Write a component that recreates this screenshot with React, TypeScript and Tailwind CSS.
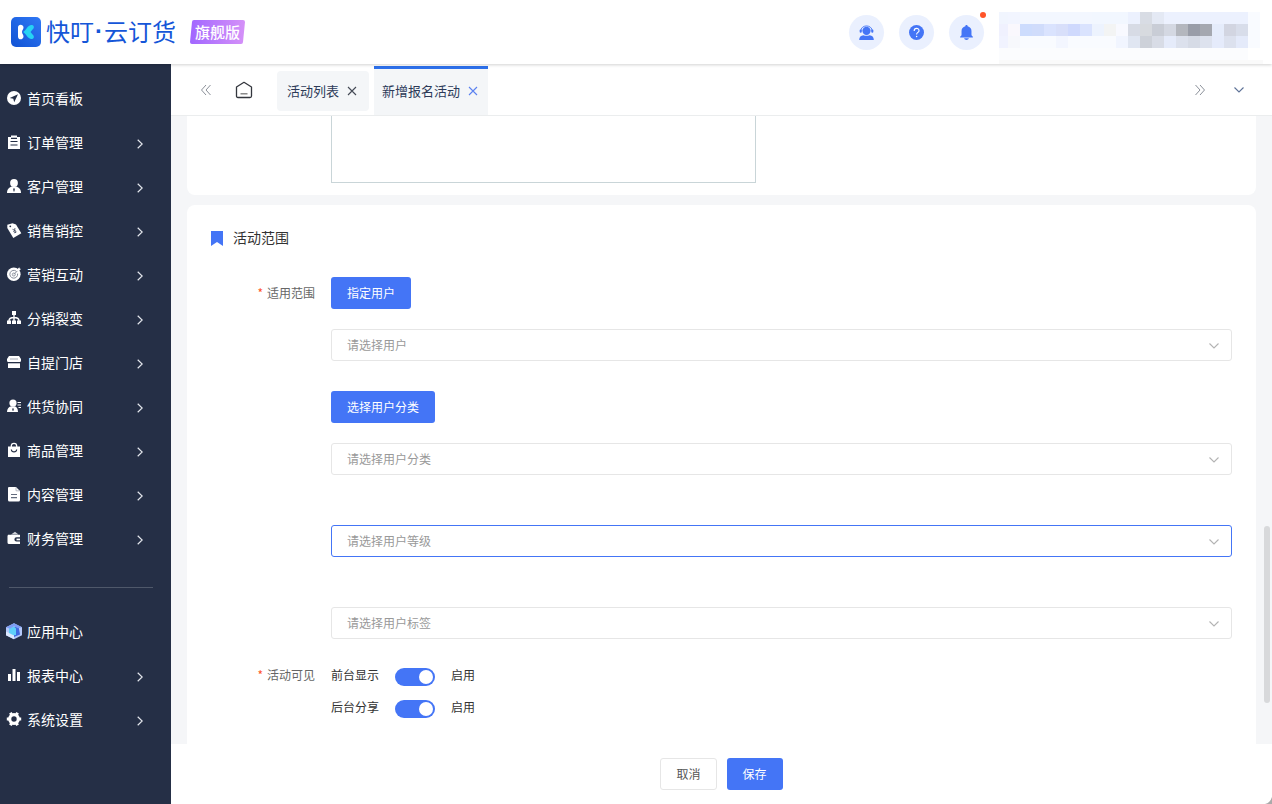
import { useId, useState } from "react";
import type { ReactNode } from "react";

const INK = "#252f46";

const icons: Record<string, ReactNode> = {
  home: (
    <>
      <circle cx="7" cy="7" r="7" fill="#fff" />
      <path d="M11 3.2 2.8 6.9l3.5.9.9 3.4z" fill={INK} />
    </>
  ),
  order: (
    <>
      <path d="M1 2h3V.5h6V2h3v12H1z" fill="#fff" />
      <path d="M4 3.4h6M3.5 6.5h7M3.5 10h7" stroke={INK} strokeWidth="1.1" />
    </>
  ),
  customer: (
    <>
      <circle cx="7" cy="4" r="3.9" fill="#fff" />
      <path d="M0 14c0-4 2.500-6 5-6.500h4c2.500.5 5 2.500 5 6.500z" fill="#fff" />
      <path d="m7 9 .8 1-.4 2.500h-.8L6.200 10z" fill={INK} />
    </>
  ),
  sale: (
    <>
      <path d="M.3 1.800 5.500.2 9 1.500l5.300 8.700-8 4.800L.3 5z" fill="#fff" />
      <circle cx="3.300" cy="3.300" r=".9" fill={INK} />
      <path d="m5.500 6.300 2 .9.500-2.200M7.500 7.200l1.400 2.800M6.200 8.600l2.500-1.300M6.900 10l2.500-1.300" fill="none" stroke={INK} strokeWidth=".7" />
    </>
  ),
  target: (
    <>
      <circle cx="6.800" cy="7.300" r="6.800" fill="#fff" />
      <path d="M9.300 4.300A3.900 3.900 0 1 0 10.600 6.600" fill="none" stroke="#868c99" strokeWidth="1" />
      <circle cx="6.800" cy="7.500" r="1.500" fill="none" stroke="#868c99" strokeWidth=".9" />
      <path d="m7 7.300 4.200-4.200" stroke="#868c99" strokeWidth="1" />
      <path d="m10 2.500 2.300-2.300.4 1.400 1.300.4-2.300 2.200-1.500-.2z" fill="#fff" />
    </>
  ),
  fission: (
    <>
      <path d="M5 0h4v4H5zM0 9.500h4V13H0zM5 9.500h4V13H5zM10 9.500h4V13h-4z" fill="#fff" />
      <path d="M7 3v7M2 10c0-2.500 2-3.500 5-3.500s5 1 5 3.500" fill="none" stroke="#fff" strokeWidth="1.400" />
    </>
  ),
  store: (
    <>
      <path d="M2 1h10l2 3v1.500c0 1-.8 1.600-1.700 1.600H1.700C.8 7.100 0 6.500 0 5.500V4z" fill="#fff" />
      <path d="M3 4h8" stroke="#a5aab4" strokeWidth="1" />
      <path d="M1 8.300h12V13H1z" fill="#fff" />
    </>
  ),
  supply: (
    <>
      <circle cx="6" cy="4" r="3.600" fill="#fff" />
      <path d="M0 13c0-3.500 2-5.200 4.500-5.700h3c2 .4 3.500 2.200 3.500 5.700z" fill="#fff" />
      <path d="m6 9 .8 1-.5 2h-.6L5.200 10z" fill={INK} />
      <path d="M10.500 3.500H14M10.500 6H14M11.500 8.500H14" stroke="#fff" strokeWidth="1.100" />
    </>
  ),
  goods: (
    <>
      <path d="M1 3.500h12V14H1z" fill="#fff" />
      <path d="M4.300 4V3a2.700 2.700 0 0 1 5.400 0v1" fill="none" stroke="#fff" strokeWidth="1.300" />
      <path d="M4.300 6.500c.4 3.200 5 3.200 5.400 0" fill="none" stroke={INK} strokeWidth="1.200" />
    </>
  ),
  content: (
    <>
      <path d="M2 0h7l4 4v9a1.500 1.500 0 0 1-1.500 1.500h-9A1.500 1.500 0 0 1 1 13V1a1 1 0 0 1 1-1z" fill="#fff" />
      <path d="M9 .3v3.500h3.800" fill="none" stroke="#a5aab4" strokeWidth=".8" />
      <path d="M4 7.500h6M4 10.700h6" stroke="#626b7d" strokeWidth="1.200" />
    </>
  ),
  finance: (
    <>
      <path d="m4 3.500 4-2.700 3.500 2.700z" fill="#cfd2d8" />
      <path d="M1 3.800h12v2.500H9.500a2 2 0 0 0 0 4.200H13V13H2a1.500 1.500 0 0 1-1.500-1.500V5z" fill="#fff" />
      <path d="M9.500 7.600H13v1.700H9.500z" fill="#fff" />
    </>
  ),
  apps: (
    <>
      <path d="m7-.8 8 4v8l-8 4-8-4v-8z" fill="#b4c9fa" />
      <path d="m7 3 4.500-1 1.500 8.500L7 13z" fill="#4169e1" />
      <path d="m2 4.500 5-2 2 2V11l-5 .5-2-2z" fill="#5fd0fa" />
      <path d="m-1 3.200 8-4 8 4-4 1-4-2-4 2.500z" fill="#7d9df5" />
      <path d="m-1 7.500 8 4v3.700l-8-4z" fill="#dce9ff" />
    </>
  ),
  report: <path d="M1 6h3v7H1zM5.500 1h3v12h-3zM10 4h3v9h-3z" fill="#fff" />,
  settings: (
    <>
      <circle cx="7" cy="7" r="4.300" fill="none" stroke="#fff" strokeWidth="3.200" />
      <path
        d="M3.400.8 4.900 3.300M10.600.8 9.100 3.300M3.400 13.200l1.500-2.500M10.600 13.200l-1.500-2.500M-.2 7h2.700M11.500 7h2.700"
        stroke="#fff"
        strokeWidth="3"
      />
    </>
  ),
};

type Item = { icon: string; label: string; leaf?: boolean };

const primary: Item[] = [
  { icon: "home", label: "首页看板", leaf: true },
  { icon: "order", label: "订单管理" },
  { icon: "customer", label: "客户管理" },
  { icon: "sale", label: "销售销控" },
  { icon: "target", label: "营销互动" },
  { icon: "fission", label: "分销裂变" },
  { icon: "store", label: "自提门店" },
  { icon: "supply", label: "供货协同" },
  { icon: "goods", label: "商品管理" },
  { icon: "content", label: "内容管理" },
  { icon: "finance", label: "财务管理" },
];

const secondary: Item[] = [
  { icon: "apps", label: "应用中心", leaf: true },
  { icon: "report", label: "报表中心" },
  { icon: "settings", label: "系统设置" },
];

function NavList({ items }: { items: Item[] }) {
  return (
    <ul>
      {items.map((item) => (
        <li key={item.label}>
          <a href="#" className="flex h-11 items-center pr-7 pl-[7px] text-sm text-white">
            <svg viewBox="0 0 14 15" className="mr-1.5 h-[15px] w-3.5 shrink-0 overflow-visible" aria-hidden="true">
              {icons[item.icon]}
            </svg>
            <span className="flex-1">{item.label}</span>
            {!item.leaf && (
              <svg viewBox="0 0 6 10" className="mt-1 h-2.5 w-1.5" fill="none" stroke="#e3e6ec" strokeWidth="1.200" aria-hidden="true">
                <path d="m.7.7 4.500 4.300L.7 9.300" />
              </svg>
            )}
          </a>
        </li>
      ))}
    </ul>
  );
}

function Chevron({ className, stroke }: { className: string; stroke: string }) {
  return (
    <svg viewBox="0 0 10 6" className={className} fill="none" stroke={stroke} strokeWidth="1.100" aria-hidden="true">
      <path d="m.5.5 4.500 4.500L9.500.5" />
    </svg>
  );
}

function DoubleArrow({ flip }: { flip?: boolean }) {
  return (
    <svg viewBox="0 0 10 12" className="h-3 w-2.5" fill="none" stroke="#8b9099" strokeWidth="1" aria-hidden="true">
      <path d={flip ? "m.5 1 4.500 5-4.500 5M5 1l4.500 5L5 11" : "M5 1 .5 6 5 11M9.500 1 5 6l4.500 5"} />
    </svg>
  );
}

function Cross({ stroke }: { stroke: string }) {
  return (
    <svg viewBox="0 0 10 10" className="size-2.5" fill="none" stroke={stroke} strokeWidth="1.100" aria-hidden="true">
      <path d="m1 1 8 8M9 1 1 9" />
    </svg>
  );
}

const mosaic: string[][] = [
  ["#f1f5fe", "#f2f5ff", "#f3f7ff", "#f3f7ff", "#f3f7ff", "#f3f7ff", "#f3f7ff", "#f3f7ff", "#f2f7ff", "#f2f7ff", "#f2f7ff", "#ecf1fe", "#d8dce4", "#e4e9f4", "#ecf1fe", "#ecf1fe", "#ecf1fe", "#ecf1fe", "#ecf1fe", "#ecf1fe", "#ecf1fe", "#f9fbff"],
  ["#f0f1fe", "#faf8fd", "#cddcfd", "#d0dcfb", "#dae3fe", "#d8dffa", "#cfd9fd", "#dae3fe", "#edf3fe", "#f3f4f4", "#f8f9ff", "#d7dbe5", "#d7dadf", "#c9cdd6", "#d4d8e2", "#b4b7be", "#999da8", "#a5a8b0", "#e5ecfb", "#d2d5e1", "#d8ddea", "#f9fbff"],
  ["#f1f3ff", "#f7f8fc", "#f9fbff", "#f9fbff", "#f9fbff", "#f3f6ff", "#f9fbff", "#f9fbff", "#f9fbff", "#f9fbff", "#f1f5ff", "#e0e6f2", "#cdd1d9", "#d8dce6", "#e5ebfa", "#dce1ed", "#d6dbe6", "#dde2ee", "#e5ebfb", "#dce1ee", "#e4eafa", "#f9fbff"],
];

function AccountMosaic() {
  return (
    <svg viewBox="0 0 264 52" className="h-[52px] w-[264px]" shapeRendering="crispEdges" aria-hidden="true">
      <rect y="36" width="249" height="16" fill="#fbfcfe" />
      <rect y="48" width="264" height="4" fill="#fafafa" />
      {mosaic.map((row, r) =>
        row.map((fill, c) => (
          <rect key={`${r}-${c}`} x={c === 0 ? 0 : c * 12 - 3} y={r * 12} width={c === 0 ? 9 : 12} height="12" fill={fill} />
        )),
      )}
    </svg>
  );
}

function Header() {
  const round = "relative flex size-[35px] items-center justify-center rounded-full bg-[#eaf0fe]";
  return (
    <header className="relative z-10 flex h-16 shrink-0 items-center bg-white pr-[9px] pl-[11px] shadow-[0_1px_3px_rgba(0,0,0,0.18)]">
      <svg viewBox="0 0 30 30" className="size-[30px]" aria-hidden="true">
        <defs>
          <linearGradient id="logo" x1="1" y1="0" x2="0" y2="1">
            <stop offset="0" stopColor="#2f78f5" />
            <stop offset="1" stopColor="#1153d4" />
          </linearGradient>
        </defs>
        <rect width="30" height="30" rx="5" fill="url(#logo)" />
        <path d="M7 10.500C7 6.500 12.500 7 12.500 10.500c0 2-1.500 2.500-1.500 4.500s1.500 2.500 1.500 4.500c0 3.500-5.500 4-5.500 0z" fill="#fff" />
        <path d="M12 15c3-1.500 4.500-7 8.500-7 2.500 0 3 2.500 1.500 4l-2.500 3L22 18c1.500 1.500 1 4-1.500 4-4 0-5.500-5.500-8.500-7z" fill="#26d3f4" />
      </svg>
      <h1 className="ml-[5px] flex w-[130px] justify-between pb-0.5 text-2xl whitespace-nowrap text-[#1556d8]">
        <span>快叮</span>
        <span className="font-['Liberation_Sans',sans-serif] font-bold">·</span>
        <span>云订货</span>
      </h1>
      <span className="relative ml-3.5 flex h-6 w-[55px] items-center justify-center text-[15px] font-medium text-white">
        <svg viewBox="0 0 55 24" className="absolute inset-0 h-6 w-[55px]" aria-hidden="true">
          <defs>
            <linearGradient id="badge">
              <stop offset="0" stopColor="#a166ff" />
              <stop offset="1" stopColor="#d591f8" />
            </linearGradient>
          </defs>
          <path d="M4 0h49q2 0 2 2l-2 20q0 2-2 2H2q-2 0-2-2L2 2q0-2 2-2z" fill="url(#badge)" />
        </svg>
        <span className="relative">旗舰版</span>
      </span>
      <div className="ml-auto flex items-center gap-[15px]">
        <button className={round} aria-label="客服">
          <svg viewBox="0 0 16 16" className="size-[15px]" fill="#4475f6" aria-hidden="true">
            <circle cx="8" cy="6.200" r="4.400" />
            <path d="M2 7C1.500-1 14.500-1 14 7" fill="none" stroke="#4475f6" strokeWidth="1" />
            <rect x=".7" y="4.800" width="2.200" height="3.500" rx="1" />
            <rect x="13.100" y="4.800" width="2.200" height="3.500" rx="1" />
            <path d="M.2 16c0-3.300 1.800-5 4.500-5.200 1.900 1 4.700 1 6.600 0 2.700.2 4.500 1.900 4.500 5.200z" />
          </svg>
        </button>
        <button className={round} aria-label="帮助">
          <svg viewBox="0 0 16 16" className="size-[15px]" aria-hidden="true">
            <circle cx="8" cy="8" r="8" fill="#4475f6" />
            <path d="M5.500 6.300c0-3.600 5.200-3.500 5.200-.3 0 1.900-2.600 1.900-2.600 4" fill="none" stroke="#fff" strokeWidth="1.200" />
            <circle cx="8.100" cy="12.200" r=".8" fill="#fff" />
          </svg>
        </button>
        <button className={round} aria-label="消息">
          <svg viewBox="0 0 16 16" className="size-[15px]" fill="#4475f6" aria-hidden="true">
            <path d="M8 0c.8 0 1.200.5 1.200 1.200 2.600.6 4.100 2.500 4.100 5.200v4.500l1.500 1.600v.8H1.200v-.8l1.500-1.600V6.400c0-2.700 1.500-4.600 4.100-5.200C6.800.5 7.200 0 8 0zM5.500 14.200h5C10.200 16.600 5.800 16.600 5.500 14.200z" />
          </svg>
          <span className="absolute -top-[3px] -right-0.5 size-1.5 rounded-full bg-[#ff5429]" />
        </button>
        <div className="-mb-3">
          <AccountMosaic />
        </div>
      </div>
    </header>
  );
}

function TabBar() {
  return (
    <div className="flex h-[52px] shrink-0 items-center border-b border-[#ebedee] bg-white pr-7 pl-[30px]">
      <button aria-label="向左"><DoubleArrow /></button>
      <button className="ml-6" aria-label="首页">
        <svg viewBox="0 0 18 18" className="size-[18px]" fill="none" stroke="#33363d" strokeWidth="1.300" strokeLinejoin="round" aria-hidden="true">
          <path d="M1.500 6 9 1.300 16.500 6v9q0 1.500-1.500 1.500H3q-1.500 0-1.500-1.500z" />
          <path d="M5.500 12.800h7" stroke="#777" />
        </svg>
      </button>
      <div className="ml-6 flex items-end gap-[5px] self-stretch text-[13px] text-[#2c3a58]">
        <div className="mb-1 flex h-10 items-center gap-2 rounded bg-[#f4f6f8] pr-3 pl-2.5">
          <a href="#">活动列表</a>
          <button aria-label="关闭活动列表"><Cross stroke="#444a55" /></button>
        </div>
        <div className="flex h-[49px] items-center gap-2 border-t-3 border-[#2d70ea] bg-[#f4f6f8] pr-2.5 pb-0.5 pl-2">
          <a href="#" aria-current="page">新增报名活动</a>
          <button aria-label="关闭新增报名活动"><Cross stroke="#5b82f0" /></button>
        </div>
      </div>
      <button className="ml-auto" aria-label="向右"><DoubleArrow flip /></button>
      <button className="ml-[29px]" aria-label="更多标签"><Chevron className="h-1.5 w-2.5" stroke="#5e7297" /></button>
    </div>
  );
}

function Picker({ text, active }: { text: string; active?: boolean }) {
  return (
    <div className="relative">
      <select
        aria-label={text}
        className={`block h-8 w-full appearance-none rounded-[3px] border bg-white px-[15px] text-xs text-[#999] outline-none ${active ? "border-[#4475f6]" : "border-[#e6e6e6]"}`}
      >
        <option>{text}</option>
      </select>
      <Chevron className="pointer-events-none absolute top-3.5 right-[13px] h-1.5 w-2.5" stroke="#b3b3b3" />
    </div>
  );
}

function Toggle({ label }: { label: string }) {
  const id = useId();
  const [on, setOn] = useState(true);
  return (
    <div className="flex h-8 items-center gap-4 text-xs text-[#333]">
      <label htmlFor={id}>{label}</label>
      <input
        id={id}
        type="checkbox"
        role="switch"
        checked={on}
        onChange={() => setOn(!on)}
        className="mt-1 flex h-[18px] w-10 appearance-none items-center rounded-full bg-[#c8cbd2] px-0.5 before:size-3.5 before:rounded-full before:bg-white checked:justify-end checked:bg-[#4475f6]"
      />
      <span>{on ? "启用" : "停用"}</span>
    </div>
  );
}

function FormRow({ label, children }: { label: string; children: ReactNode }) {
  return (
    <div className="flex gap-4">
      <div className="flex h-8 w-[104px] shrink-0 items-center justify-end gap-1 text-xs text-[#666]">
        <span className="text-[#ff5429]">*</span>
        <span>{label}</span>
      </div>
      <div className="min-w-0 flex-1">{children}</div>
    </div>
  );
}

const solid = "h-8 rounded-[3px] bg-[#4475f6] px-4 text-xs text-white";

export default function App() {
  return (
    <div className="flex h-screen flex-col overflow-hidden bg-white font-['Noto_Sans_CJK_SC','Liberation_Sans',sans-serif]">
      <Header />
      <div className="flex min-h-0 flex-1">
        <nav className="w-[171px] shrink-0 bg-[#252f46] pt-3">
          <NavList items={primary} />
          <hr className="mt-[27px] mr-[18px] mb-[21px] ml-[9px] border-[#4f586a]" />
          <NavList items={secondary} />
        </nav>
        <div className="flex min-w-0 flex-1 flex-col">
          <TabBar />
          <main className="relative min-h-0 flex-1 overflow-hidden bg-[#f5f6f8] px-4">
            <section className="rounded-b-lg bg-white pb-3 pl-36">
              <textarea
                aria-label="活动说明"
                className="block h-[67px] w-[425px] resize-none border border-t-0 border-[#c9d5d8] outline-none"
              />
            </section>
            <section className="mt-2.5 h-full rounded-t-lg bg-white px-6 pt-4">
              <h2 className="mb-6 flex h-8 items-center gap-2.5 text-sm text-[#333]">
                <svg viewBox="0 0 12 15" className="mt-0.5 h-[15px] w-3" fill="#4475f6" aria-hidden="true">
                  <path d="M0 0h12v15l-6-4-6 4z" />
                </svg>
                活动范围
              </h2>
              <FormRow label="适用范围">
                <button className={solid}>指定用户</button>
                <div className="mt-5"><Picker text="请选择用户" /></div>
                <button className={`mt-[30px] ${solid}`}>选择用户分类</button>
                <div className="mt-5 flex flex-col gap-[50px]">
                  <Picker text="请选择用户分类" />
                  <Picker text="请选择用户等级" active />
                  <Picker text="请选择用户标签" />
                </div>
              </FormRow>
              <div className="mt-5">
                <FormRow label="活动可见">
                  <Toggle label="前台显示" />
                  <Toggle label="后台分享" />
                </FormRow>
              </div>
            </section>
            <div className="absolute right-0.5 bottom-[41px] h-[177px] w-1.5 rounded-full bg-[#d8d9db]" />
          </main>
          <footer className="relative flex h-[60px] shrink-0 items-center justify-center gap-2.5 bg-white">
            <button className="h-8 rounded-[3px] border border-[#e6e6e6] bg-white px-[15px] text-xs text-[#555]">取消</button>
            <button className={solid}>保存</button>
            <svg viewBox="0 0 7 7" className="absolute right-0 bottom-0 size-[7px]" aria-hidden="true">
              <path d="M7 0v7H0q5-1 7-7z" fill="#aaa" />
            </svg>
          </footer>
        </div>
      </div>
    </div>
  );
}
